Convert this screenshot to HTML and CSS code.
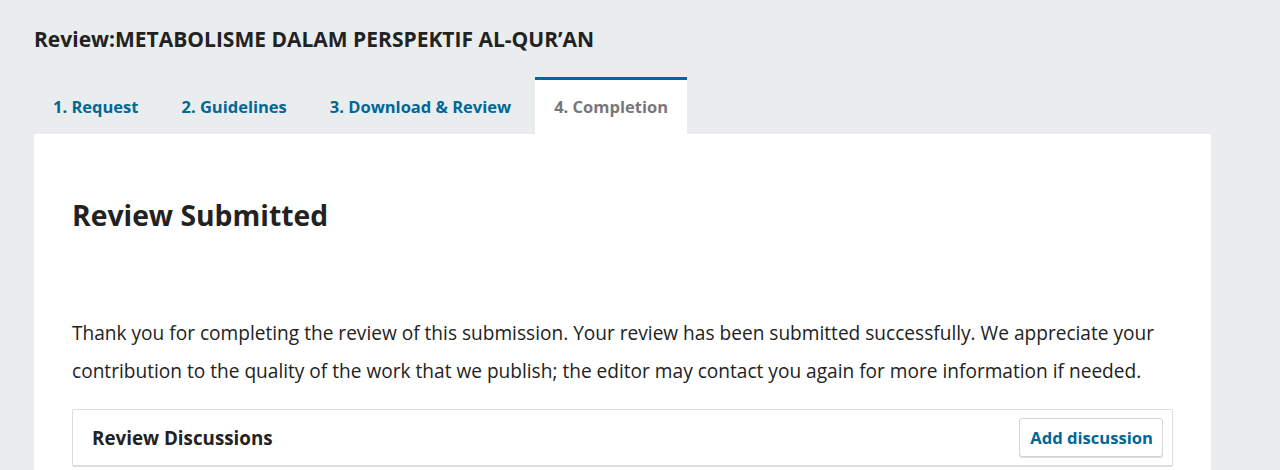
FILE: index.html
```html
<!DOCTYPE html>
<html lang="en">
<head>
<meta charset="utf-8">
<title>Review</title>
<link rel="stylesheet" href="styles.css">
</head>
<body>
<div class="page">
  <h1 class="page-title">Review:METABOLISME DALAM PERSPEKTIF AL-QUR’AN</h1>
  <ul class="tabs">
    <li class="tab"><a href="#">1. Request</a></li>
    <li class="tab"><a href="#">2. Guidelines</a></li>
    <li class="tab"><a href="#">3. Download &amp; Review</a></li>
    <li class="tab active"><a href="#">4. Completion</a></li>
  </ul>
  <div class="panel">
    <h2 class="panel-title">Review Submitted</h2>
    <p class="message">Thank you for completing the review of this submission. Your review has been submitted successfully. We appreciate your contribution to the quality of the work that we publish; the editor may contact you again for more information if needed.</p>
    <div class="grid">
      <div class="grid-header">
        <span class="grid-title">Review Discussions</span>
        <button class="btn">Add discussion</button>
      </div>
    </div>
  </div>
</div>
</body>
</html>
```

FILE: styles.css
```css
html, body {
  margin: 0;
  padding: 0;
}
body {
  background: #eaedee;
  font-family: "Open Sans", "Noto Sans", sans-serif;
  color: #222;
}
.page {
  padding: 23px 69px 0 34px;
}
.page-title {
  margin: 0;
  font-size: 21px;
  line-height: 32px;
  font-weight: 700;
  color: #222;
}
.tabs {
  list-style: none;
  margin: 22px 0 0;
  padding: 0;
  display: flex;
  gap: 5px;
}
.tab {
  border-top: 3px solid transparent;
  box-sizing: border-box;
  height: 57px;
  padding-bottom: 2px;
  display: flex;
  align-items: center;
}
.tab a {
  display: block;
  padding: 0 19px;
  font-size: 16.5px;
  font-weight: 700;
  color: #006798;
  text-decoration: none;
}
.tab.active {
  background: #fff;
  border-top-color: #006798;
}
.tab.active a {
  color: #777;
}
.panel {
  background: #fff;
  padding: 38px 38px 20px;
}
.panel-title {
  margin: 22px 0 0;
  font-size: 28.3px;
  line-height: 42px;
  font-weight: 700;
}
.message {
  margin: 78px 0 0;
  font-size: 19.1px;
  line-height: 38px;
}
.grid {
  margin-top: 19px;
  border: 1px solid #ddd;
  border-radius: 2px;
  box-shadow: 0 0 1px rgba(0,0,0,0.05);
}
.grid-header {
  display: flex;
  align-items: center;
  justify-content: space-between;
  padding: 8px 9px 8px 19px;
  border-bottom: 1px solid #ddd;
}
.grid-title {
  font-size: 18.8px;
  font-weight: 700;
}
.btn {
  font-family: inherit;
  font-size: 16.6px;
  font-weight: 700;
  color: #006798;
  background: #fff;
  border: 1px solid #d6d6d6;
  border-radius: 3px;
  box-shadow: 0 1px 0 #ddd;
  height: 39px;
  padding: 0 9px 0 10px;
}
```
